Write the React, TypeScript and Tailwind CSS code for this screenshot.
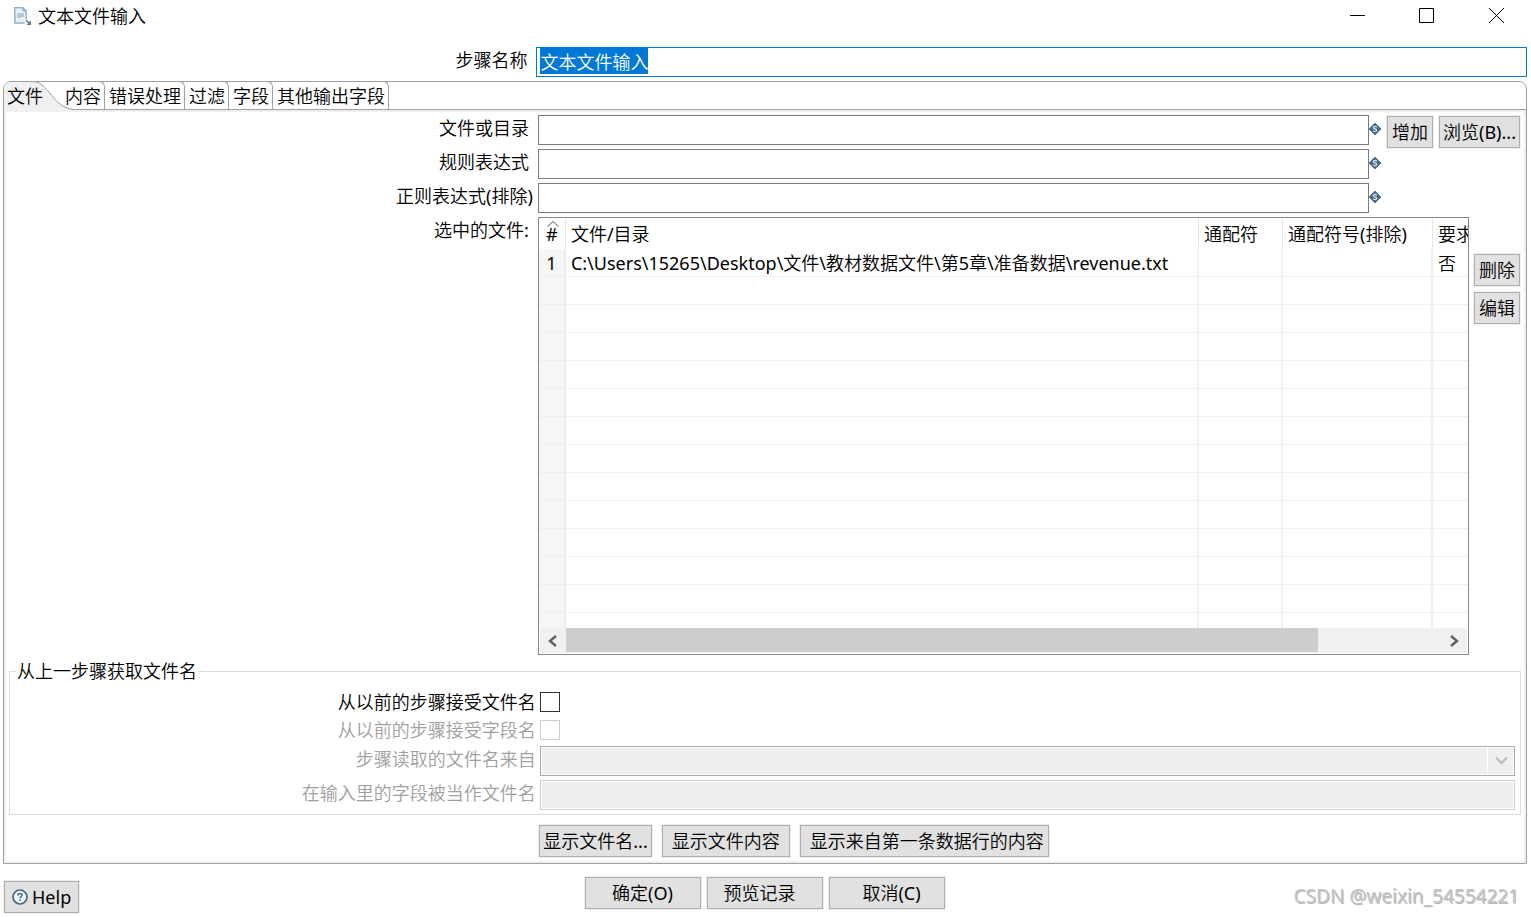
import { useEffect, useRef } from "react";
import type { ReactNode } from "react";

function DocumentIcon() {
  return (
    <svg width="19" height="20" viewBox="0 0 19 20" fill="none" aria-hidden="true">
      <path d="M1.500 1h8.500l3.500 3.500v13h-12z" fill="#e6eff6" />
      <path d="M11.500 17h-9.700V1.700h8l3.400 3.300v8" stroke="#8fb0c6" strokeWidth="1.400" />
      <path d="M9.500 1.500v4h4z" fill="#8fb0c6" />
      <path d="M4 7h7v4h-3v1H4z" fill="#b5c8d5" />
      <path d="M13.200 14.200l3.500 3.500" stroke="#53799b" strokeWidth="1.500" />
      <path d="M18 14.500v4.500h-4.500z" fill="#53799b" />
    </svg>
  );
}

function VariableIcon() {
  return (
    <svg className="mt-2" width="12" height="12" viewBox="0 0 12 12" fill="none" aria-hidden="true">
      <path d="M6 0l6 6-6 6-6-6z" fill="#44698a" stroke="#44698a" strokeWidth="0.800" />
      <path
        d="M7.800 4.200C7.400 3.200 4.400 2.900 4.300 4.600 4.300 6.300 7.700 5.600 7.700 7.400 7.600 9.100 4.400 8.900 4.100 7.700"
        stroke="#d5e0e8"
        strokeWidth="1.300"
      />
    </svg>
  );
}

function PushButton({ className, children }: { className: string; children: ReactNode }) {
  return (
    <button
      type="button"
      className={
        "h-8 shrink-0 whitespace-nowrap border border-[#adadad] bg-[#e1e1e1] leading-[30px] outline outline-[#f0f0f0] " +
        className
      }
    >
      {children}
    </button>
  );
}

function PathField({ id, label, labelPad, children }: { id: string; label: string; labelPad: string; children?: ReactNode }) {
  return (
    <>
      <label htmlFor={id} className={"text-right leading-[26px] " + labelPad}>
        {label}
      </label>
      <input id={id} type="text" className="ml-px h-[30px] min-w-0 border border-[#7a7a7a] bg-white px-1 outline-none" />
      <VariableIcon />
      <div className="flex gap-[6px] pt-px">{children}</div>
    </>
  );
}

const tabs = ["内容", "错误处理", "过滤", "字段", "其他输出字段"];
const headings = ["文件/目录", "通配符", "通配符号(排除)", "要求"];
const files = [["C:\\Users\\15265\\Desktop\\文件\\教材数据文件\\第5章\\准备数据\\revenue.txt", "", "", "否"]];
const rows = Array.from({ length: 14 }, (_, i) => files[i] ?? ["", "", "", ""]);

function FileTable() {
  return (
    <div className="min-w-0 flex-1 border border-[#828790] bg-white">
      <table className="w-full table-fixed border-separate border-spacing-0 text-left">
        <colgroup>
          <col className="w-[27px]" />
          <col />
          <col className="w-[84px]" />
          <col className="w-[150px]" />
          <col className="w-[35px]" />
        </colgroup>
        <thead>
          <tr className="h-[31px]">
            <th className="relative border-r border-[#e5e5e5] p-0 text-center font-normal">
              <svg className="absolute left-2 top-[3px]" width="12" height="6" viewBox="0 0 12 6" fill="none" aria-hidden="true">
                <path d="M0.500 5.500L6 0.500l5.500 5" stroke="#555" />
              </svg>
              #
            </th>
            {headings.map((h, i) => (
              <th
                key={h}
                className={
                  "overflow-hidden whitespace-nowrap py-0 pl-[5px] pr-0 font-normal " +
                  (i < 3 ? "border-r border-[#e5e5e5]" : "")
                }
              >
                {h}
              </th>
            ))}
          </tr>
        </thead>
        <tbody>
          {rows.map((row, r) => (
            <tr key={r} className={r === rows.length - 1 ? "h-[15px]" : "h-7"}>
              <td
                className={
                  "border-r-2 border-r-[#e6ebf5] bg-[#f6f6f6] px-0 pb-0 text-center " +
                  (r < rows.length - 1 ? "border-b border-b-[#ededed] pt-[2px] leading-[25px]" : "pt-0")
                }
              >
                {row[0] ? r + 1 : ""}
              </td>
              {row.map((cell, c) => (
                <td
                  key={c}
                  className={
                    "overflow-hidden whitespace-nowrap pb-0 pl-[5px] pr-0 " +
                    (c < 3 ? "border-r-2 border-r-[#edf1f7] " : "") +
                    (r < rows.length - 1 ? "border-b border-b-[#f0f0f0] pt-[2px] leading-[25px]" : "pt-0")
                  }
                >
                  {cell}
                </td>
              ))}
            </tr>
          ))}
        </tbody>
      </table>
      <div className="mx-px mb-px flex h-[25px] bg-[#f0f0f0]">
        <button type="button" aria-label="向左滚动" className="flex w-[26px] items-center justify-center">
          <svg width="9" height="12" viewBox="0 0 9 12" fill="none" aria-hidden="true">
            <path d="M8 1L2 6l6 5" stroke="#606060" strokeWidth="2.400" />
          </svg>
        </button>
        <div className="flex-1">
          <div className="h-6 w-[86%] bg-[#cdcdcd]" />
        </div>
        <button type="button" aria-label="向右滚动" className="flex w-[26px] items-center justify-center">
          <svg width="9" height="12" viewBox="0 0 9 12" fill="none" aria-hidden="true">
            <path d="M1 1l6 5-6 5" stroke="#606060" strokeWidth="2.400" />
          </svg>
        </button>
      </div>
    </div>
  );
}

export default function App() {
  const nameRef = useRef<HTMLInputElement>(null);

  useEffect(() => {
    nameRef.current?.focus();
    nameRef.current?.select();
  }, []);

  return (
    <div className="flex min-h-screen flex-col bg-white font-['Noto_Sans','Noto_Sans_CJK_SC_DemiLight','Noto_Sans_CJK_SC',sans-serif] text-[18px] leading-6 text-black">
      <header className="flex h-[31px] items-center justify-between pl-[13px]">
        <div className="flex items-center gap-[6px]">
          <DocumentIcon />
          <h1>文本文件输入</h1>
        </div>
        <div className="flex h-full">
          <button type="button" aria-label="最小化" className="flex w-[70px] items-center justify-center">
            <svg width="15" height="15" viewBox="0 0 15 15" aria-hidden="true">
              <path d="M0 7.500h15" stroke="#000" />
            </svg>
          </button>
          <button type="button" aria-label="最大化" className="flex w-[69px] items-center justify-center">
            <svg width="15" height="15" viewBox="0 0 15 15" fill="none" aria-hidden="true">
              <path d="M0.500 0.500h14v14h-14z" stroke="#000" />
            </svg>
          </button>
          <button type="button" aria-label="关闭" className="flex w-[70px] items-center justify-center">
            <svg width="15" height="15" viewBox="0 0 15 15" fill="none" aria-hidden="true">
              <path d="M0 0l15 15M15 0L0 15" stroke="#000" />
            </svg>
          </button>
        </div>
      </header>

      <div className="mt-4 flex pr-1">
        <label htmlFor="step-name" className="w-[calc(35%+2px)] shrink-0 pr-[9px] text-right leading-[26px]">
          步骤名称
        </label>
        <input
          id="step-name"
          ref={nameRef}
          type="text"
          defaultValue="文本文件输入"
          className="h-[30px] min-w-0 flex-1 border border-[#0078d7] bg-white px-[3px] pb-[2px] leading-6 outline-none selection:bg-[#0078d7] selection:text-white"
        />
      </div>

      <main className="ml-[3px] mr-1 mt-1 flex flex-1 flex-col rounded-t-lg border border-[#a0a0a0]">
        <div role="tablist" className="flex h-7 border-b border-[#a0a0a0]">
          <button type="button" role="tab" aria-selected="true" className="relative w-[57px] pl-[3px] text-left">
            <svg className="absolute left-0 top-0" width="72" height="30" viewBox="0 0 72 30" fill="none" aria-hidden="true">
              <path d="M0 30V6Q1 0 7 0H31C45 1 49 27 71 27.500V30z" fill="#f0f0f0" />
              <path d="M29 -0.500C45 0 49 27 71 27.500" stroke="#a0a0a0" />
            </svg>
            <span className="relative">文件</span>
          </button>
          {tabs.map((t) => (
            <button
              key={t}
              type="button"
              role="tab"
              aria-selected="false"
              className="relative -mt-px rounded-tr-md border-r border-t border-[#a0a0a0] pl-1 pr-[3px]"
            >
              {t}
            </button>
          ))}
        </div>

        <div className="flex flex-1 flex-col border-2 border-[#f0f0f0] pb-1 pt-[3px]">
          <div className="grid auto-rows-[34px] grid-cols-[calc(35%+1px)_minmax(0,1fr)_12px_auto] items-start pr-1">
            <PathField id="path" label="文件或目录" labelPad="pr-2">
              <PushButton className="ml-[6px] px-1">增加</PushButton>
              <PushButton className="px-[3px]">浏览(B)...</PushButton>
            </PathField>
            <PathField id="include" label="规则表达式" labelPad="pr-2" />
            <PathField id="exclude" label="正则表达式(排除)" labelPad="pr-1" />
          </div>

          <div className="flex items-start pr-1">
            <div className="w-[calc(35%+1px)] shrink-0 pr-2 text-right leading-[26px]">选中的文件:</div>
            <div className="ml-px flex min-w-0 flex-1 items-start gap-[5px]">
              <FileTable />
              <div className="flex flex-col gap-[6px] pt-[37px]">
                <PushButton className="px-1">删除</PushButton>
                <PushButton className="px-1">编辑</PushButton>
              </div>
            </div>
          </div>

          <fieldset className="mx-[3px] mt-1 border border-[#dcdcdc] pb-1 pr-[5px]">
            <legend className="ml-[6px] px-px">从上一步骤获取文件名</legend>
            <div className="grid grid-cols-[calc(35%+3px)_minmax(0,1fr)] items-start pt-[9px]">
              <label htmlFor="accept-name" className="h-7 pr-1 text-right leading-5">
                从以前的步骤接受文件名
              </label>
              <input id="accept-name" type="checkbox" className="size-5 appearance-none border border-[#333] bg-white" />
              <label htmlFor="accept-field" className="h-[26px] pr-1 text-right leading-5 text-[#a0a0a0]">
                从以前的步骤接受字段名
              </label>
              <input id="accept-field" type="checkbox" disabled className="size-5 appearance-none border border-[#ccc] bg-white" />
              <label htmlFor="source-step" className="h-[34px] pr-1 text-right leading-[26px] text-[#a0a0a0]">
                步骤读取的文件名来自
              </label>
              <div className="relative flex">
                <select
                  id="source-step"
                  disabled
                  className="h-[30px] w-full appearance-none border border-[#a9a9b2] bg-[#efefef] opacity-100 ring-1 ring-inset ring-white"
                />
                <span className="pointer-events-none absolute inset-y-px right-px flex w-[27px] items-center justify-center border-l border-white">
                  <svg width="13" height="10" viewBox="0 0 13 10" fill="none" aria-hidden="true">
                    <path d="M1 1.500l5.500 5.500L12 1.500" stroke="#bfbfbf" strokeWidth="2.400" />
                  </svg>
                </span>
              </div>
              <label htmlFor="name-field" className="pr-1 text-right leading-[26px] text-[#a0a0a0]">
                在输入里的字段被当作文件名
              </label>
              <input
                id="name-field"
                type="text"
                disabled
                className="h-[30px] min-w-0 border border-[#ccc] bg-[#efefef] px-1 ring-1 ring-inset ring-white"
              />
            </div>
          </fieldset>

          <div className="mt-[10px] flex gap-[10px] pl-[calc(35%+2px)]">
            <PushButton className="px-[3px]">显示文件名...</PushButton>
            <PushButton className="px-[9px]">显示文件内容</PushButton>
            <PushButton className="pl-[9px] pr-1">显示来自第一条数据行的内容</PushButton>
          </div>
        </div>
      </main>

      <footer className="grid grid-cols-[1fr_auto_1fr] pb-1 pl-1 pr-[6px] pt-[13px]">
        <div className="flex items-end">
          <PushButton className="flex items-center gap-1 px-[7px]">
            <svg width="16" height="16" viewBox="0 0 16 16" fill="none" aria-hidden="true">
              <circle cx="8" cy="8" r="7" fill="#f4f7fa" stroke="#44698a" strokeWidth="1.700" />
              <path d="M5.800 6.500C5.800 3.700 10.200 3.900 10.100 6.300 10 7.700 8 7.700 8 9.300" stroke="#44698a" strokeWidth="1.500" />
              <path d="M7.200 10.400h1.600v1.600H7.200z" fill="#44698a" />
            </svg>
            Help
          </PushButton>
        </div>
        <div className="flex h-9 items-start gap-[6px]">
          <PushButton className="w-[116px]">确定(O)</PushButton>
          <PushButton className="w-[116px] pr-[10px]">预览记录</PushButton>
          <PushButton className="w-[116px] pl-[10px]">取消(C)</PushButton>
        </div>
        <p className="self-center pr-[6px] pt-[2px] text-right text-[19px] text-[#c4c4c4] [text-shadow:1px_1px_0_#8c8c8c99]">
          CSDN @weixin_54554221
        </p>
      </footer>
    </div>
  );
}
